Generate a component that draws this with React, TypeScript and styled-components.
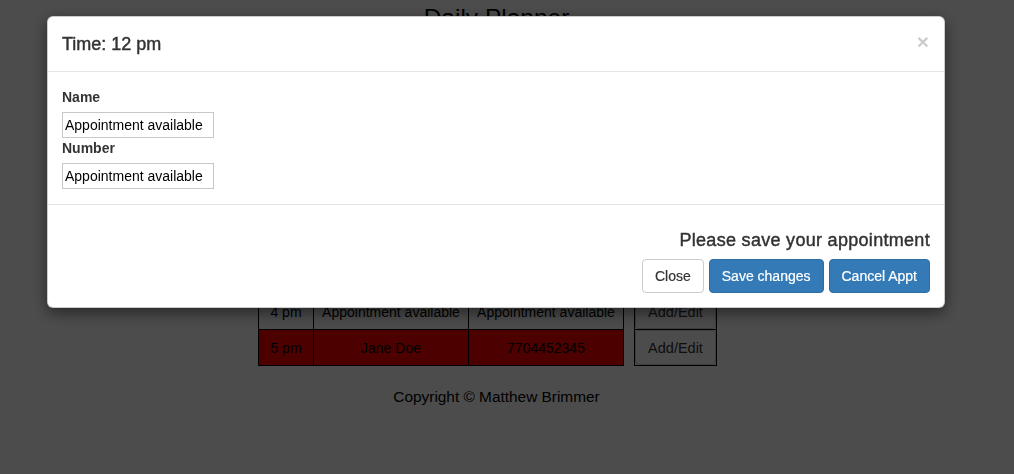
import React from "react";
import styled, { createGlobalStyle } from "styled-components";

const GlobalStyle = createGlobalStyle`
  html, body {
    margin: 0;
    padding: 0;
    background: #fff;
    font-family: "Liberation Sans", Arial, Helvetica, sans-serif;
    font-size: 14px;
    line-height: 20px;
    color: #333;
  }
  * { box-sizing: border-box; }
`;

const Page = styled.div`
  width: 1014px;
  min-height: 474px;
  padding-right: 21px;
  display: flex;
  flex-direction: column;
  align-items: center;
`;

const Heading = styled.h1`
  margin: 4px 0 0;
  height: 37px;
  font-size: 24.5px;
  line-height: 27px;
  font-weight: 400;
  color: #000;
  text-align: center;
`;

const Content = styled.div`
  width: 477px;
  display: flex;
  gap: 10px;
  align-items: flex-start;
`;

const Schedule = styled.div`
  border-top: 1px solid #000;
  border-left: 1px solid #000;
  display: flex;
  flex-direction: column;
`;

const Row = styled.div<{ $busy?: boolean }>`
  display: grid;
  grid-template-columns: 55px 155px 155px;
  height: 36px;
  background: ${(p) => (p.$busy ? "#ff0000" : "#fff")};
`;

const Cell = styled.div`
  border-right: 1px solid #000;
  border-bottom: 1px solid #000;
  display: flex;
  align-items: center;
  justify-content: center;
  color: #000;
  font-size: 14px;
  white-space: nowrap;
`;

const Actions = styled.div`
  border-top: 1px solid #000;
  border-left: 1px solid #000;
  display: flex;
  flex-direction: column;
`;

const ActionCell = styled.div`
  width: 82px;
  height: 36px;
  border-right: 1px solid #000;
  border-bottom: 1px solid #000;
  display: flex;
`;

const EditButton = styled.button`
  flex: 1;
  margin: 0;
  border: 1px solid #ccc;
  border-radius: 4px;
  background: #fff;
  color: #333;
  font-family: inherit;
  font-size: 14.5px;
  padding: 0;
`;

const Footer = styled.footer`
  margin-top: 21px;
  font-size: 15.4px;
  line-height: 20px;
  color: #000;
  text-align: center;
`;

const Backdrop = styled.div`
  position: fixed;
  inset: 0;
  background: rgba(0, 0, 0, 0.7);
`;

const Modal = styled.div`
  position: fixed;
  left: 47px;
  top: 16px;
  width: 898px;
  background: #fff;
  border: 1px solid rgba(0, 0, 0, 0.2);
  border-radius: 6px;
  box-shadow: 0 5px 15px rgba(0, 0, 0, 0.5);
  display: flex;
  flex-direction: column;
`;

const ModalHeader = styled.div`
  padding: 15px 15px 15px 14px;
  border-bottom: 1px solid #e5e5e5;
  display: flex;
  align-items: center;
  justify-content: space-between;
`;

const ModalTitle = styled.h4`
  margin: 0;
  font-size: 18px;
  line-height: 24px;
  font-weight: 400;
  color: #333;
  -webkit-text-stroke: 0.45px #333;
`;

const CloseX = styled.button`
  border: 0;
  background: transparent;
  padding: 0;
  margin: -6px 0 0;
  font-family: inherit;
  font-size: 21px;
  font-weight: 700;
  line-height: 1;
  color: #000;
  opacity: 0.2;
`;

const ModalBody = styled.div`
  padding: 15px 14px;
  display: flex;
  flex-direction: column;
  align-items: flex-start;
`;

const Label = styled.label`
  font-weight: 700;
  font-size: 14px;
  line-height: 20px;
  color: #333;
  margin-bottom: 5px;
`;

const Field = styled.input`
  width: 152px;
  height: 26px;
  border: 1px solid #c8c8c8;
  padding: 1px 2px;
  font-family: inherit;
  font-size: 14px;
  color: #000;
  background: #fff;
  outline: none;
`;

const ModalFooter = styled.div`
  border-top: 1px solid #e5e5e5;
  padding: 15px 14px 14px 15px;
  display: flex;
  flex-direction: column;
  align-items: flex-end;
`;

const Notice = styled.h4`
  margin: 10px 0 9px;
  font-size: 18px;
  line-height: 20px;
  font-weight: 400;
  color: #333;
  letter-spacing: 0.3px;
  -webkit-text-stroke: 0.45px #333;
`;

const ButtonRow = styled.div`
  display: flex;
  gap: 5px;
`;

const Btn = styled.button<{ $primary?: boolean }>`
  height: 34px;
  padding: 6px 12px;
  border-radius: 4px;
  font-family: inherit;
  font-size: 14px;
  line-height: 20px;
  border: 1px solid ${(p) => (p.$primary ? "#2e6da4" : "#ccc")};
  background: ${(p) => (p.$primary ? "#337ab7" : "#fff")};
  color: ${(p) => (p.$primary ? "#fff" : "#333")};
  -webkit-text-stroke: 0.2px currentColor;
`;

const hours = ["9 am", "10 am", "11 am", "12 pm", "1 pm", "2 pm", "3 pm", "4 pm", "5 pm"];

export default function App() {
  return (
    <>
      <GlobalStyle />
      <Page>
        <Heading>Daily Planner</Heading>
        <Content>
          <Schedule>
            {hours.map((h) => {
              const busy = h === "5 pm";
              return (
                <Row key={h} $busy={busy}>
                  <Cell>{h}</Cell>
                  <Cell>{busy ? "Jane Doe" : "Appointment available"}</Cell>
                  <Cell>{busy ? "7704452345" : "Appointment available"}</Cell>
                </Row>
              );
            })}
          </Schedule>
          <Actions>
            {hours.map((h) => (
              <ActionCell key={h}>
                <EditButton>Add/Edit</EditButton>
              </ActionCell>
            ))}
          </Actions>
        </Content>
        <Footer>Copyright © Matthew Brimmer</Footer>
      </Page>
      <Backdrop />
      <Modal>
        <ModalHeader>
          <ModalTitle>Time: 12 pm</ModalTitle>
          <CloseX aria-label="Close">×</CloseX>
        </ModalHeader>
        <ModalBody>
          <Label>Name</Label>
          <Field defaultValue="Appointment available" />
          <Label>Number</Label>
          <Field defaultValue="Appointment available" />
        </ModalBody>
        <ModalFooter>
          <Notice>Please save your appointment</Notice>
          <ButtonRow>
            <Btn>Close</Btn>
            <Btn $primary>Save changes</Btn>
            <Btn $primary>Cancel Appt</Btn>
          </ButtonRow>
        </ModalFooter>
      </Modal>
    </>
  );
}
